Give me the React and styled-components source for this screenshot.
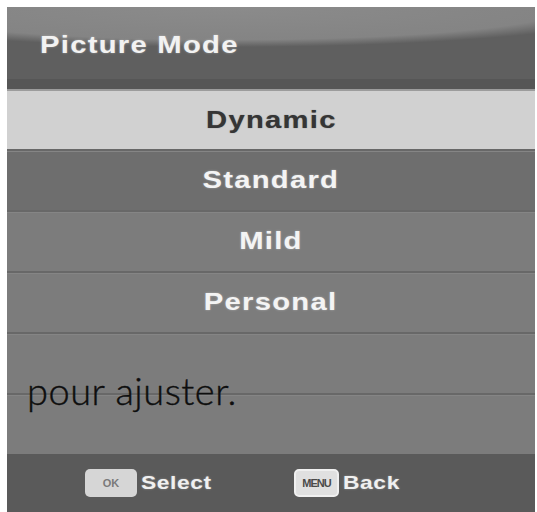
import React from 'react'
import styled, { createGlobalStyle } from 'styled-components'

const GlobalStyle = createGlobalStyle`
  html, body {
    margin: 0;
    padding: 0;
    background: #ffffff;
  }
  body {
    font-family: 'Liberation Sans', Arial, sans-serif;
  }
`

const modes = [
  { label: 'Dynamic', tone: 'active' },
  { label: 'Standard', tone: 'dark' },
  { label: 'Mild', tone: 'normal' },
  { label: 'Personal', tone: 'normal' },
  { label: '', tone: 'normal' },
  { label: '', tone: 'normal' },
]

const App = () => {
  return (
    <>
      <GlobalStyle />
      <Screen>
        <Panel>
          <Header>
            <Title>Picture Mode</Title>
          </Header>
          {modes.map((m, i) => (
            <Row key={i} $tone={m.tone} $first={i === 0}>
              {m.label ? <Label $tone={m.tone}>{m.label}</Label> : null}
            </Row>
          ))}
          <Footer>
            <Hint>
              <KeyCap>OK</KeyCap>
              <HintText>Select</HintText>
            </Hint>
            <Hint>
              <KeyCap $menu>MENU</KeyCap>
              <HintText>Back</HintText>
            </Hint>
          </Footer>
          <Caption>pour ajuster.</Caption>
        </Panel>
      </Screen>
    </>
  )
}

const Screen = styled.div`
  box-sizing: border-box;
  width: 537px;
  height: 512px;
  padding: 7px 2px 0 7px;
  overflow: hidden;
  background: #ffffff;
`

const Panel = styled.div`
  position: relative;
  display: flex;
  flex-direction: column;
  height: 100%;
  background-color: #7c7c7c;
  box-shadow: inset 1px 0 0 #8a8a8a;
`

const Header = styled.div`
  box-sizing: border-box;
  height: 84px;
  display: flex;
  align-items: center;
  padding: 0 0 6px 33px;
  background:
    linear-gradient(to bottom, transparent 72px, #565656 72px),
    radial-gradient(ellipse 78% 40px at 42% 0, #8b8b8b 0%, #848484 82%, #5f5f5f 100%);
  background-color: #5e5e5e;
  border-bottom: 2px solid #9c9c9c;
`

const Title = styled.h1`
  margin: 0;
  font-size: 23px;
  font-weight: bold;
  letter-spacing: 1px;
  color: #f2f2f2;
  transform: scaleX(1.27);
  transform-origin: left center;
  text-shadow: 0 0 2px rgba(255, 255, 255, 0.4);
`

const rowBg = {
  active: '#d1d1d1',
  dark: '#6e6e6e',
  normal: '#7c7c7c',
}

const Row = styled.div`
  box-sizing: border-box;
  height: ${(p) => (p.$first ? '58px' : '61px')};
  display: flex;
  align-items: center;
  justify-content: center;
  background-color: ${(p) => rowBg[p.$tone]};
  border-top: ${(p) => (p.$tone === 'active' ? 'none' : '2px solid #686868')};
  box-shadow: ${(p) => (p.$tone === 'active' ? 'none' : 'inset 0 1px 0 #858585')};
`

const Label = styled.span`
  display: inline-block;
  font-size: 23px;
  font-weight: bold;
  letter-spacing: 1px;
  color: ${(p) => (p.$tone === 'active' ? '#353535' : '#f4f4f4')};
  transform: scaleX(1.27);
  text-shadow: ${(p) => (p.$tone === 'active' ? '0 0 1px rgba(40,40,40,0.5)' : '0 0 2px rgba(255,255,255,0.4)')};
`

const Footer = styled.div`
  flex: 1;
  display: flex;
  align-items: center;
  gap: 94px;
  padding-left: 78px;
  background-color: #5a5a5a;
`

const Hint = styled.div`
  display: flex;
  align-items: center;
  gap: 4px;
`

const KeyCap = styled.span`
  box-sizing: border-box;
  display: inline-flex;
  align-items: center;
  justify-content: center;
  width: ${(p) => (p.$menu ? '45px' : '52px')};
  height: 28px;
  border-radius: 5px;
  background-color: ${(p) => (p.$menu ? '#e0e0e0' : '#d6d6d6')};
  border: ${(p) => (p.$menu ? '2px solid #f0f0f0' : 'none')};
  color: ${(p) => (p.$menu ? '#4a4a4a' : '#7a7a7a')};
  font-size: 11px;
  font-weight: bold;
  letter-spacing: ${(p) => (p.$menu ? '-1px' : '0')};
  font-family: 'Liberation Sans Narrow', 'Liberation Sans', sans-serif;
`

const HintText = styled.span`
  display: inline-block;
  font-size: 19px;
  font-weight: bold;
  letter-spacing: 0.5px;
  color: #f0f0f0;
  transform: scaleX(1.2);
  transform-origin: left center;
  text-shadow: 0 0 2px rgba(255, 255, 255, 0.35);
`

const Caption = styled.div`
  position: absolute;
  left: 20px;
  top: 364px;
  font-family: Lato, 'Open Sans', sans-serif;
  font-size: 38px;
  font-weight: 300;
  letter-spacing: 0.5px;
  color: #0e0e0e;
  line-height: 1;
  -webkit-text-stroke: 0.4px #0e0e0e;
`

export default App
